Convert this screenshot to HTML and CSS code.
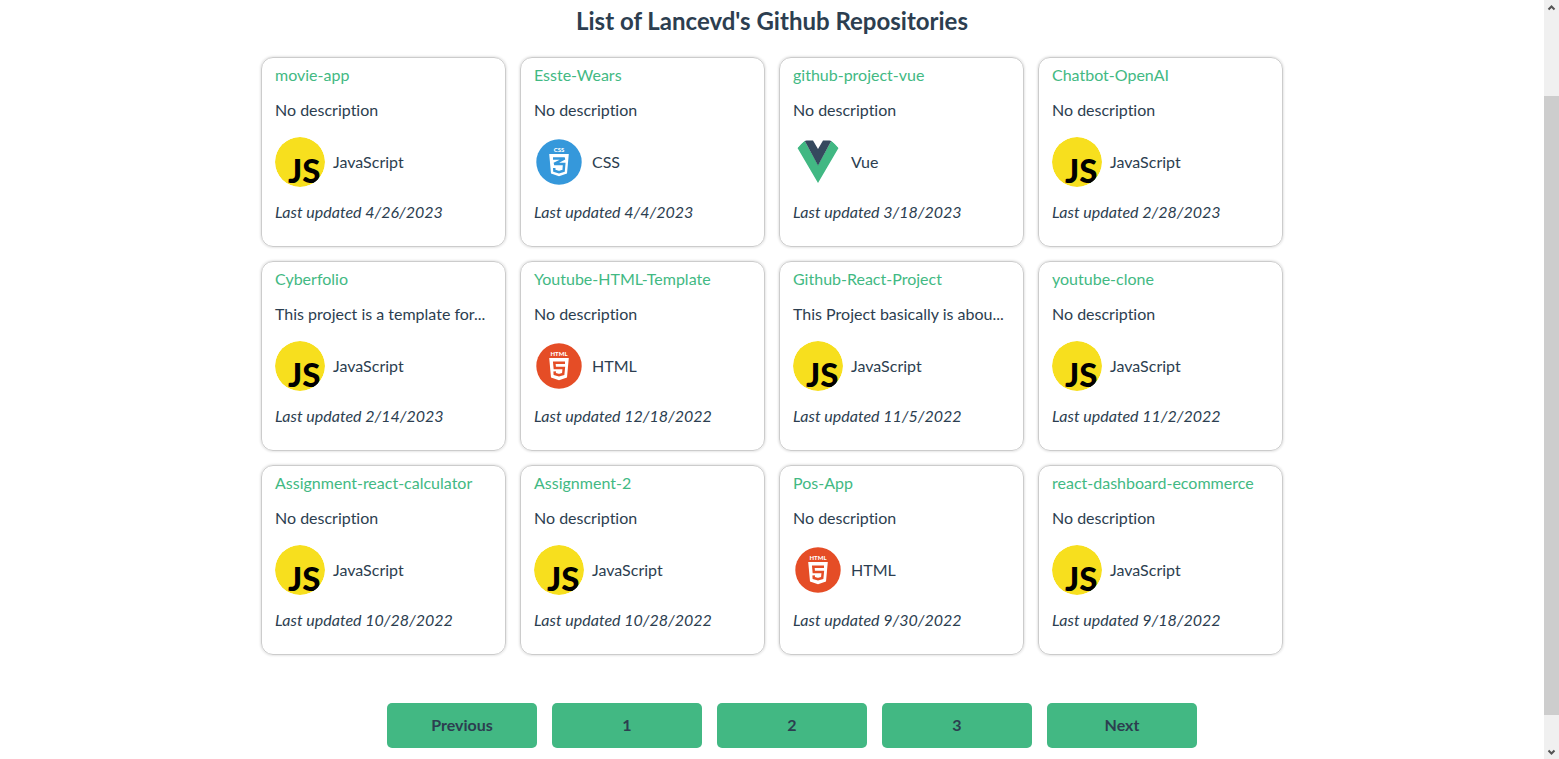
FILE: index.html
```html
<!DOCTYPE html>
<html lang="en">
<head>
<meta charset="utf-8">
<title>Github Repositories</title>
<link rel="stylesheet" href="styles.css">
</head>
<body>
<svg class="defs" aria-hidden="true">
  <symbol id="js" viewBox="0 0 50 50">
    <circle cx="25" cy="25" r="25" fill="#f7df1e"/>
    <text class="js-mark" x="13" y="46">JS</text>
  </symbol>
  <symbol id="css" viewBox="0 0 50 50">
    <circle cx="25" cy="25" r="22.7" fill="#3598db"/>
    <text class="shield-label" x="25" y="15">CSS</text>
    <path d="M15.200 17h19.600l-1.800 19.600-8 2.600-8-2.600z" fill="#fff"/>
    <path d="M19 21.500h11.700l-10.500 5.400h10l-.6 6.800-4.600 1.500-4.600-1.500-.2-2.700" fill="none" stroke="#3598db" stroke-width="2.5"/>
  </symbol>
  <symbol id="html" viewBox="0 0 50 50">
    <circle cx="25" cy="25" r="22.7" fill="#e54d26"/>
    <text class="shield-label" x="25" y="15">HTML</text>
    <path d="M15.200 17h19.600l-1.800 19.600-8 2.600-8-2.600z" fill="#fff"/>
    <path d="M31 21.800H20.300l.5 5.200h9l-.6 6-4.200 1.300-4.200-1.300-.2-2.700" fill="none" stroke="#e54d26" stroke-width="2.5"/>
  </symbol>
  <symbol id="vue" viewBox="0 0 50 50">
    <path d="M11.500 3.500 4.500 11 25 46 45.500 11 38.500 3.500 25 28z" fill="#41b883"/>
    <path d="M11.500 3.500H20L25 12l5-8.500h8.500L25 28.500z" fill="#35495e"/>
  </symbol>
</svg>
<div class="page">
  <main class="content">
    <h1 class="heading">List of Lancevd's Github Repositories</h1>
    <section class="grid">
      <article class="card"><a class="name" href="#">movie-app</a><p class="about">No description</p><div class="lang"><svg class="icon"><use href="#js"/></svg><span>JavaScript</span></div><p class="date">Last updated 4/26/2023</p></article>
      <article class="card"><a class="name" href="#">Esste-Wears</a><p class="about">No description</p><div class="lang"><svg class="icon"><use href="#css"/></svg><span>CSS</span></div><p class="date">Last updated 4/4/2023</p></article>
      <article class="card"><a class="name" href="#">github-project-vue</a><p class="about">No description</p><div class="lang"><svg class="icon"><use href="#vue"/></svg><span>Vue</span></div><p class="date">Last updated 3/18/2023</p></article>
      <article class="card"><a class="name" href="#">Chatbot-OpenAI</a><p class="about">No description</p><div class="lang"><svg class="icon"><use href="#js"/></svg><span>JavaScript</span></div><p class="date">Last updated 2/28/2023</p></article>
      <article class="card"><a class="name" href="#">Cyberfolio</a><p class="about">This project is a template for...</p><div class="lang"><svg class="icon"><use href="#js"/></svg><span>JavaScript</span></div><p class="date">Last updated 2/14/2023</p></article>
      <article class="card"><a class="name" href="#">Youtube-HTML-Template</a><p class="about">No description</p><div class="lang"><svg class="icon"><use href="#html"/></svg><span>HTML</span></div><p class="date">Last updated 12/18/2022</p></article>
      <article class="card"><a class="name" href="#">Github-React-Project</a><p class="about">This Project basically is abou...</p><div class="lang"><svg class="icon"><use href="#js"/></svg><span>JavaScript</span></div><p class="date">Last updated 11/5/2022</p></article>
      <article class="card"><a class="name" href="#">youtube-clone</a><p class="about">No description</p><div class="lang"><svg class="icon"><use href="#js"/></svg><span>JavaScript</span></div><p class="date">Last updated 11/2/2022</p></article>
      <article class="card"><a class="name" href="#">Assignment-react-calculator</a><p class="about">No description</p><div class="lang"><svg class="icon"><use href="#js"/></svg><span>JavaScript</span></div><p class="date">Last updated 10/28/2022</p></article>
      <article class="card"><a class="name" href="#">Assignment-2</a><p class="about">No description</p><div class="lang"><svg class="icon"><use href="#js"/></svg><span>JavaScript</span></div><p class="date">Last updated 10/28/2022</p></article>
      <article class="card"><a class="name" href="#">Pos-App</a><p class="about">No description</p><div class="lang"><svg class="icon"><use href="#html"/></svg><span>HTML</span></div><p class="date">Last updated 9/30/2022</p></article>
      <article class="card"><a class="name" href="#">react-dashboard-ecommerce</a><p class="about">No description</p><div class="lang"><svg class="icon"><use href="#js"/></svg><span>JavaScript</span></div><p class="date">Last updated 9/18/2022</p></article>
    </section>
    <nav class="pages" aria-label="Pages">
      <button class="page-button" type="button">Previous</button>
      <button class="page-button" type="button">1</button>
      <button class="page-button" type="button">2</button>
      <button class="page-button" type="button">3</button>
      <button class="page-button" type="button">Next</button>
    </nav>
  </main>
  <div class="scrollbar" aria-hidden="true">
    <svg class="arrow" viewBox="0 0 15 15"><path d="M4.500 9.500 7.500 6.500l3 3"/></svg>
    <div class="track"><div class="thumb"></div></div>
    <svg class="arrow" viewBox="0 0 15 15"><path d="M4.500 6.500l3 3 3-3"/></svg>
  </div>
</div>
</body>
</html>
```
FILE: styles.css
```css
* {
  box-sizing: border-box;
}

body {
  margin: 0;
  background: #fff;
  color: #2c3e50;
  font-family: Avenir, Lato, "Open Sans", sans-serif;
  font-size: 16px;
  font-variant-ligatures: none;
  line-height: 24px;
}

.defs {
  display: none;
}

.page {
  display: grid;
  grid-template-columns: 1fr 15px;
  min-height: 100vh;
}

.content {
  padding: 6px 16px 11px;
}

.heading {
  margin: 0 0 21px;
  font-size: 24px;
  line-height: 30px;
  text-align: center;
}

.grid {
  display: grid;
  grid-template-columns: repeat(4, 1fr);
  gap: 14px;
  max-width: 1022px;
  margin: 0 auto;
}

.card {
  padding: 5px 13px 22px;
  border: 1px solid #ccc;
  border-radius: 12px;
  box-shadow: 0 0 3px rgba(0, 0, 0, 0.2);
  white-space: nowrap;
}

.name {
  display: block;
  color: #42b983;
  text-decoration: none;
}

.about {
  margin: 11px 0 15px;
}

.lang {
  display: flex;
  align-items: center;
  gap: 8px;
}

.icon {
  width: 50px;
  height: 50px;
  border-radius: 50%;
  overflow: hidden;
}

.date {
  margin: 13px 0 0;
  font-style: italic;
}

.js-mark {
  font: 900 33px Lato, sans-serif;
  fill: #000;
}

.shield-label {
  font: 900 6px Lato, sans-serif;
  fill: #fff;
  text-anchor: middle;
}

.pages {
  display: flex;
  justify-content: center;
  gap: 15px;
  margin-top: 48px;
  padding-left: 40px;
}

.page-button {
  width: 150px;
  height: 45px;
  padding: 0 0 2px;
  border: 0;
  border-radius: 5px;
  background: #42b883;
  color: #2c3e50;
  font: inherit;
  font-weight: 700;
}

.scrollbar {
  display: flex;
  flex-direction: column;
  background: #f0f0f0;
}

.arrow {
  width: 15px;
  height: 15px;
  fill: none;
  stroke: #555;
  stroke-width: 2;
}

.track {
  display: grid;
  flex: 1;
  grid-template-rows: 81fr 619fr 29fr;
}

.thumb {
  grid-row: 2;
  background: #cdcdcd;
}
```
